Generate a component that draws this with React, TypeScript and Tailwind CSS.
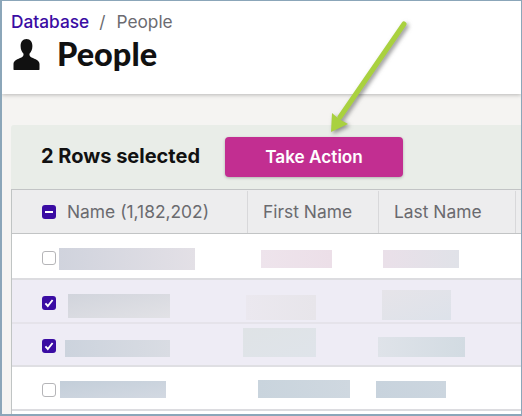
import React from "react";

const ROWS = [
  {
    selected: false,
    h: "h-[46px]",
    border: "border-[#dcdce0]",
    name: "ml-[3px] mt-[14px] h-[22px] w-[136px] bg-gradient-to-r from-[#d0d3dd] to-[#e3e0e6]",
    first: "ml-[13px] mt-[16px] h-[18px] w-[71px] bg-gradient-to-r from-[#eee4ec] to-[#ecdfe8]",
    last: "ml-[4px] mt-[16px] h-[18px] w-[76px] bg-gradient-to-r from-[#eae0e9] to-[#e0e2e8]",
  },
  {
    selected: true,
    h: "h-[44px]",
    border: "border-[#e5e3ea]",
    name: "ml-[12px] mt-[14px] h-[24px] w-[102px] bg-gradient-to-br from-[#d1d4dc] to-[#e2e2e6]",
    first: "ml-[-2px] mt-[15px] h-[25px] w-[70px] bg-gradient-to-r from-[#ebe8ef] to-[#e7e5ea]",
    last: "ml-[3px] mt-[10px] h-[30px] w-[69px] bg-gradient-to-br from-[#e6e4e9] to-[#dde2ea]",
  },
  {
    selected: true,
    h: "h-[43px]",
    border: "border-[#dfdfe3]",
    name: "ml-[9px] mt-[16px] h-[17px] w-[105px] bg-gradient-to-r from-[#ccd3dd] to-[#d9dce3]",
    first: "ml-[-5px] mt-[4px] h-[29px] w-[73px] bg-gradient-to-br from-[#dfe3e6] to-[#dfe4ea]",
    last: "ml-[-1px] mt-[13px] h-[20px] w-[87px] bg-gradient-to-r from-[#dfe3e9] to-[#d2dbe2]",
  },
  {
    selected: false,
    h: "h-[44px]",
    border: "border-[#dcdce0]",
    name: "ml-[4px] mt-[14px] h-[17px] w-[106px] bg-gradient-to-br from-[#c3ced9] to-[#d3d9e2]",
    first: "ml-[10px] mt-[13px] h-[18px] w-[92px] bg-gradient-to-r from-[#c9d4dd] to-[#cfd8e0]",
    last: "ml-[-3px] mt-[14px] h-[17px] w-[70px] bg-gradient-to-r from-[#c8d3dd] to-[#ccd6df]",
  },
];

const Check = ({ selected }: { selected: boolean }) =>
  selected ? (
    <span className="ml-[30px] mt-[3px] flex h-[14px] w-[14px] shrink-0 items-center justify-center self-center rounded-[3px] bg-[#3a0ca3]">
      <svg viewBox="0 0 14 14" className="h-[14px] w-[14px]" fill="none">
        <path d="M3.4 7.4 5.800 10 10.600 4" stroke="#fff" strokeWidth="1.900" />
      </svg>
    </span>
  ) : (
    <span className="ml-[30px] mt-[3px] h-[14px] w-[14px] shrink-0 self-center rounded-[3px] border border-[#b5b5b8] bg-white" />
  );

export default function App() {
  return (
    <div className="relative h-[416px] w-[522px] overflow-hidden border-b-2 border-l-2 border-r border-t border-[#8ba6b9] bg-[#f5f4f2] font-['Inter',sans-serif]">
      <header className="h-[93px] bg-white pl-[9px] pt-[11px] shadow-[0_1px_4px_rgba(0,0,0,0.25)]">
        <div className="flex h-[20px] items-center text-[17.3px] leading-[20px]">
          <span className="font-medium text-[#3a0ca3]">Database</span>
          <span className="ml-[10px] text-[#6b6b70]">/</span>
          <span className="ml-[11px] text-[#6b6b70]">People</span>
        </div>
        <div className="mt-[4px] flex items-center">
          <svg viewBox="0 0 27 31" className="ml-[2px] mt-[1px] h-[31px] w-[27px]" fill="#111">
            <path d="M13.5 0C9.6 0 7.6 3 7.6 7c0 3.4 1.300 6 2.800 7.600.5 1.600-.2 3.200-2 3.900C4.800 20 .5 21.300.5 25v5.500c0 .3.200.5.500.5h25c.3 0 .5-.2.500-.5V25c0-3.700-4.300-5-7.900-6.500-1.800-.7-2.500-2.300-2-3.900 1.500-1.600 2.800-4.200 2.800-7.600 0-4-2-7-5.900-7z" />
          </svg>
          <h1 className="ml-[17px] font-['Lato',sans-serif] text-[32.5px] font-black leading-[36px] text-[#111]">People</h1>
        </div>
      </header>

      <main className="pl-[9px] pt-[31px]">
        <section className="rounded-tl-[3px] bg-[#e9ede8]">
          <div className="flex h-[64px] items-center pl-[30px]">
            <span className="mt-[-2px] text-[20px] font-bold text-[#111]">2 Rows selected</span>
            <button className="ml-[25px] flex h-[40px] w-[178px] items-center justify-center rounded-[4px] bg-[#c22e91] text-[17.2px] font-semibold text-white shadow-[0_1px_3px_rgba(0,0,0,0.25)]">
              Take Action
            </button>
          </div>

          <div className="border-l border-[#c0c4c4] bg-white">
            <div className="grid h-[45px] grid-cols-[236px_131px_137px_1fr] border-y border-[#c2c4c5] bg-[#ededee] pt-[1px] text-[17.4px] text-[#6a6a6e]">
              <div className="flex items-center border-r border-[#d8d8da]">
                <span className="ml-[30px] flex h-[14px] w-[14px] items-center justify-center rounded-[3px] bg-[#3a0ca3]">
                  <span className="h-[2px] w-[8px] bg-white" />
                </span>
                <span className="ml-[11px]">Name (1,182,202)</span>
              </div>
              <div className="flex items-center border-r border-[#d8d8da] pl-[15px]">First Name</div>
              <div className="flex items-center border-r border-[#d8d8da] pl-[15px]">Last Name</div>
              <div />
            </div>

            {ROWS.map((row, i) => (
              <div
                key={i}
                className={`grid ${row.h} grid-cols-[236px_131px_137px_1fr] border-b-2 ${row.border} ${row.selected ? "bg-[#eeecf5]" : "bg-white"}`}
              >
                <div className="flex">
                  <Check selected={row.selected} />
                  <div className={row.name} />
                </div>
                <div className={row.first} />
                <div className={row.last} />
                <div />
              </div>
            ))}
            <div className="h-[10px] bg-white" />
          </div>
        </section>
      </main>

      <svg viewBox="0 0 522 416" className="absolute left-[-2px] top-[-1px] h-[416px] w-[522px] drop-shadow-[2px_2px_2px_rgba(60,60,60,0.55)]" fill="none">
        <path d="M404 24 340 117" stroke="#a9d13f" strokeWidth="5" strokeLinecap="round" />
        <path d="M331 132 332 113 339 119 348 124z" fill="#a9d13f" />
      </svg>
    </div>
  );
}
